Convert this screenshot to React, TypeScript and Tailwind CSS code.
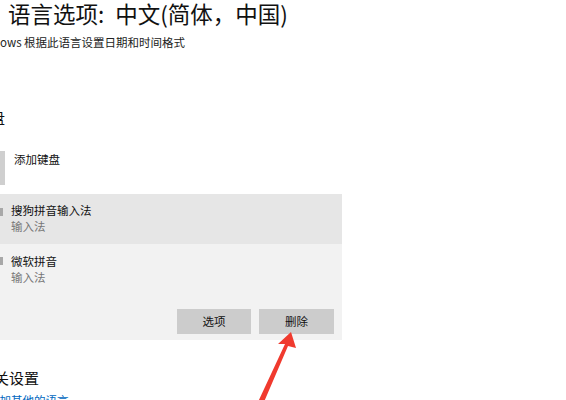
import React from "react";

const font = { fontFamily: '"Noto Sans CJK SC", "Noto Sans", sans-serif' };

export default function App() {
  return (
    <div className="relative w-[566px] h-[400px] overflow-hidden bg-white text-black" style={font}>
      <div className="flex flex-col">
        <div className="pl-[8px] h-[26px] flex items-center text-[22.5px] leading-[26px] text-[#111] whitespace-nowrap">
          <span>语言选项:</span>
          <span className="ml-[11px]">中文(简体，中国)</span>
        </div>
        <div className="mt-[8px] h-[16px] flex items-center text-[11.5px] leading-[16px] text-[#222] whitespace-nowrap">
          ows 根据此语言设置日期和时间格式
        </div>
        <div className="mt-[58px] h-[20px] flex items-center -ml-[25px] text-[15px] leading-[20px] text-[#111] whitespace-nowrap">
          键盘
        </div>
        <div className="mt-[23px] flex items-start h-[34px]">
          <div className="w-[5px] h-[34px] bg-[#cfcfcf]" />
          <div className="ml-[9px] mt-[3px] text-[11.5px] leading-none text-[#111]">添加键盘</div>
        </div>
        <div className="mt-[9px] w-[342px] flex flex-col">
          <div className="h-[50px] bg-[#e6e6e6] flex items-center">
            <div className="w-[3px] h-[8px] bg-[#a8a8a8] -mt-[14px]" />
            <div className="ml-[8px] flex flex-col gap-[4px] -mt-[3px]">
              <div className="text-[11.5px] leading-[12px] text-[#111]">搜狗拼音输入法</div>
              <div className="text-[11.5px] leading-[12px] text-[#777]">输入法</div>
            </div>
          </div>
          <div className="h-[96px] bg-[#f2f2f2] flex flex-col">
            <div className="flex items-start pt-[11px]">
              <div className="w-[3px] h-[8px] bg-[#a8a8a8] mt-[2px]" />
              <div className="ml-[8px] flex flex-col gap-[4px]">
                <div className="text-[11.5px] leading-[12px] text-[#111]">微软拼音</div>
                <div className="text-[11.5px] leading-[12px] text-[#777]">输入法</div>
              </div>
            </div>
            <div className="mt-[26px] flex justify-end gap-[8px] pr-[8px]">
              <div className="w-[74px] h-[25px] bg-[#cccccc] flex items-center justify-center text-[11.5px] text-[#111]">选项</div>
              <div className="w-[75px] h-[25px] bg-[#cccccc] flex items-center justify-center text-[11.5px] text-[#111]">删除</div>
            </div>
          </div>
        </div>
        <div className="mt-[28px] h-[20px] flex items-center -ml-[21px] text-[15px] leading-[20px] text-[#111] whitespace-nowrap">
          相关设置
        </div>
        <div className="mt-[7px] -ml-[12px] text-[11.5px] leading-none text-[#0067c0] whitespace-nowrap">添加其他的语言</div>
      </div>
      <svg className="absolute left-0 top-0" width="566" height="400" viewBox="0 0 566 400">
        <polygon points="258,402 264,402 288,346 296,348 291,332 278,344 285,344" fill="#f03a2e" />
      </svg>
    </div>
  );
}
